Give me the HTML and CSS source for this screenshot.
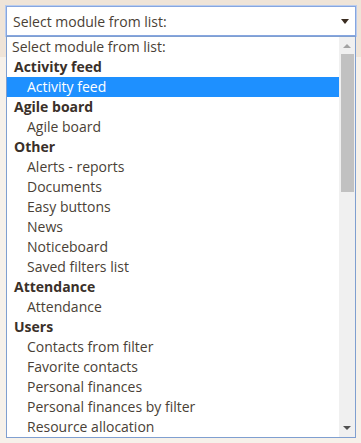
FILE: index.html
```html
<!DOCTYPE html>
<html lang="en">
<head>
  <meta charset="UTF-8">
  <title>Module picker</title>
  <link rel="stylesheet" href="styles.css">
</head>
<body>
  <div class="picker">
    <div class="select-box">
      <span class="select-label">Select module from list:</span>
      <span class="select-caret"></span>
    </div>
    <div class="list-box">
      <div class="options">
        <div class="opt placeholder">Select module from list:</div>
        <div class="group">Activity feed</div>
        <div class="opt selected">Activity feed</div>
        <div class="group">Agile board</div>
        <div class="opt">Agile board</div>
        <div class="group">Other</div>
        <div class="opt">Alerts - reports</div>
        <div class="opt">Documents</div>
        <div class="opt">Easy buttons</div>
        <div class="opt">News</div>
        <div class="opt">Noticeboard</div>
        <div class="opt">Saved filters list</div>
        <div class="group">Attendance</div>
        <div class="opt">Attendance</div>
        <div class="group">Users</div>
        <div class="opt">Contacts from filter</div>
        <div class="opt">Favorite contacts</div>
        <div class="opt">Personal finances</div>
        <div class="opt">Personal finances by filter</div>
        <div class="opt">Resource allocation</div>
      </div>
      <!-- fake scrollbar -->
      <div class="scrollbar">
        <span class="arrow up"></span>
        <div class="track"><div class="thumb"></div></div>
        <span class="arrow down"></span>
      </div>
    </div>
  </div>
</body>
</html>
```

FILE: styles.css
```css
body {
  margin: 0;
  font-family: 'Open Sans', 'DejaVu Sans', sans-serif;
  font-size: 14px;
  color: #4a3f36;
  background: linear-gradient(to bottom, #efe4d8 0, #efe4d8 57px, #f6f1ea 57px);
  min-height: 100vh;
}
.picker {
  padding: 6px 5px 0 6px;
  width: 350px;
}
.select-box {
  display: flex;
  align-items: center;
  justify-content: space-between;
  height: 28px;
  padding: 0 5px 0 6px;
  background: #fff;
  border: 1px solid #86a6e0;
  box-shadow: 0 0 0 1px #b9ccee;
}
.select-label {
  color: #4a3f36;
}
.select-caret {
  width: 0;
  height: 0;
  border-left: 4px solid transparent;
  border-right: 4px solid transparent;
  border-top: 5px solid #3a2c20;
  margin-right: 1px;
}
.list-box {
  display: flex;
  height: 400px;
  background: #fff;
  border: 1px solid #7f9fd0;
}
.options {
  flex: 1;
  overflow: hidden;
}
.opt, .group {
  height: 20px;
  line-height: 20px;
  white-space: nowrap;
}
.opt {
  padding-left: 20px;
}
.opt.placeholder {
  padding-left: 5px;
}
.group {
  padding-left: 7px;
  font-weight: bold;
  color: #3a3029;
}
.opt.selected {
  background: #1e90ff;
  color: #fff;
}
.scrollbar {
  width: 16px;
  display: flex;
  flex-direction: column;
  align-items: center;
  background: #f0f0f0;
}
.arrow {
  width: 0;
  height: 0;
  border-left: 4px solid transparent;
  border-right: 4px solid transparent;
}
.arrow.up {
  border-bottom: 4px solid #a3a3a3;
  margin: 7px 0 6px;
}
.arrow.down {
  border-top: 4px solid #505050;
  margin: 6px 0 7px;
}
.track {
  flex: 1;
  width: 100%;
  display: flex;
  justify-content: center;
}
.thumb {
  width: 13px;
  height: 138px;
  background: #c1c1c1;
}
```
